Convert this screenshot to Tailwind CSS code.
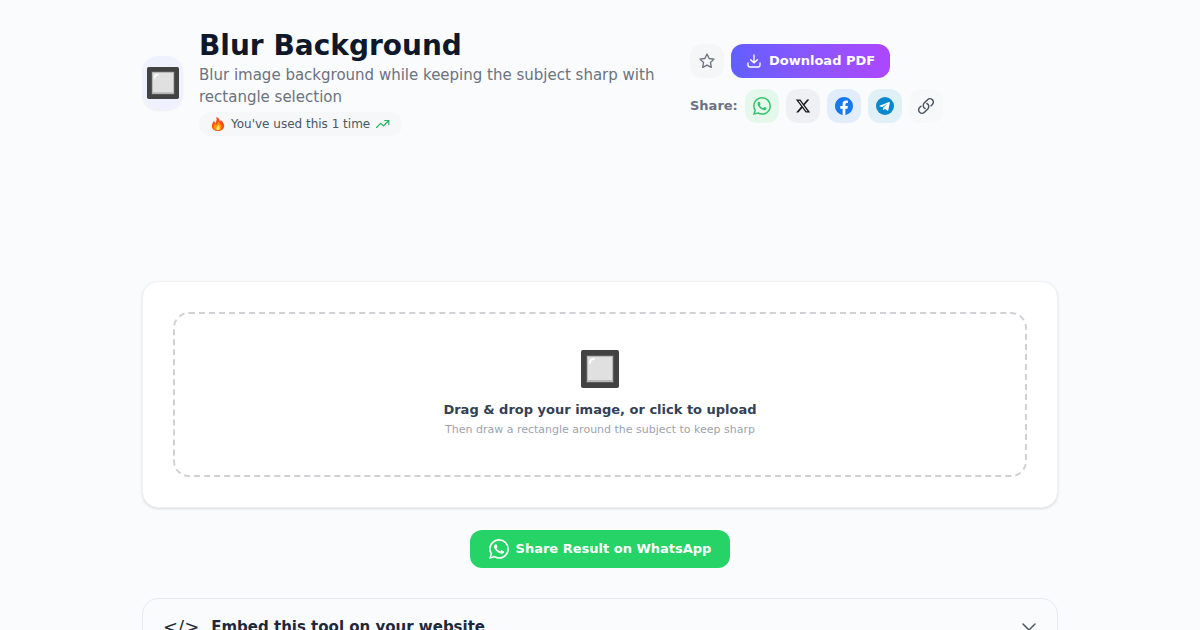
<!DOCTYPE html>
<html lang="en">
<head>
  <meta charset="UTF-8" />
  <meta name="viewport" content="width=device-width, initial-scale=1.0" />
  <title>Blur Background</title>
  <script src="https://cdn.jsdelivr.net/npm/@tailwindcss/browser@4"></script>
</head>
<body class="bg-[#fafbfd] text-[#111827] font-['DejaVu_Sans',sans-serif] overflow-x-hidden">
  <!-- shared icons -->
  <svg class="hidden" aria-hidden="true">
    <symbol id="whatsapp" viewBox="0 0 24 24">
      <path fill="currentColor" d="M17.472 14.382c-.297-.149-1.758-.867-2.03-.967-.273-.099-.471-.148-.67.15-.197.297-.767.966-.94 1.164-.173.199-.347.223-.644.075-.297-.15-1.255-.463-2.39-1.475-.883-.788-1.48-1.761-1.653-2.059-.173-.297-.018-.458.13-.606.134-.133.298-.347.446-.52.149-.174.198-.298.298-.497.099-.198.05-.371-.025-.52-.075-.149-.669-1.612-.916-2.207-.242-.579-.487-.5-.669-.51-.173-.008-.371-.01-.57-.01-.198 0-.52.074-.792.372-.272.297-1.04 1.016-1.04 2.479 0 1.462 1.065 2.875 1.213 3.074.149.198 2.096 3.2 5.077 4.487.709.306 1.262.489 1.694.625.712.227 1.36.195 1.871.118.571-.085 1.758-.719 2.006-1.413.248-.694.248-1.289.173-1.413-.074-.124-.272-.198-.57-.347m-5.421 7.403h-.004a9.87 9.87 0 01-5.031-1.378l-.361-.214-3.741.982.998-3.648-.235-.374a9.86 9.86 0 01-1.51-5.26c.001-5.45 4.436-9.884 9.888-9.884 2.64 0 5.122 1.03 6.988 2.898a9.825 9.825 0 012.893 6.994c-.003 5.45-4.437 9.884-9.885 9.884m8.413-18.297A11.815 11.815 0 0012.05 0C5.495 0 .16 5.335.157 11.892c0 2.096.547 4.142 1.588 5.945L.057 24l6.305-1.654a11.882 11.882 0 005.683 1.448h.005c6.554 0 11.89-5.335 11.893-11.893a11.821 11.821 0 00-3.48-8.413z" />
    </symbol>
    <symbol id="square-button" viewBox="0 0 38 38">
      <rect width="38" height="38" rx="2" fill="#424242" />
      <rect x="5" y="5" width="28" height="28" rx="1" fill="#5c5c5c" />
      <rect x="6" y="6" width="26" height="26" fill="#b8b8b8" />
      <rect x="7" y="7" width="24" height="23" fill="#e0e0e0" />
      <path d="M8 13c0-3 2-5 5-5 1 0 1 2 0 2-2 0-3 1-3 3 0 1-2 1-2 0z" fill="#fff" />
    </symbol>
  </svg>

  <main class="max-w-[964px] mx-auto px-6 pt-7">
    <header class="flex items-center flex-wrap md:flex-nowrap gap-4">
      <div class="w-[41px] h-[54px] shrink-0 rounded-2xl bg-[#eff1ff] shadow-xs flex items-center justify-center">
        <svg class="w-8 h-8"><use href="#square-button" /></svg>
      </div>
      <div class="w-[475px] min-w-0 max-w-full">
        <h1 class="text-[28px] leading-9 font-bold text-[#0f172a]">Blur Background</h1>
        <p class="text-[15px] leading-[22px] text-[#6b7280]">Blur image background while keeping the subject sharp with rectangle selection</p>
        <div class="inline-flex items-center gap-[6px] mt-1 px-3 h-6 rounded-full bg-[#f6f7f9] text-xs text-[#4b5563]">
          <svg class="w-[14px] h-[14px]" viewBox="0 0 16 16">
            <path d="M6 0c3 1 4 3 4 5 1 0 1-1 1-2 2 2 4 4 4 7 0 4-3 6-7 6s-7-2-7-6c0-2 1-4 3-6 0 1 0 3 1 3 1-2 2-4 1-7z" fill="#f4511e" />
            <path d="M8 5c2 2 4 4 4 6 0 3-1 4-4 4s-5-1-5-4c0-2 1-3 2-4 0 1 1 2 1 2 2-1 2-2 2-4z" fill="#ff9800" />
            <path d="M8 9c2 1 2 2 2 4 0 1-1 2-2 2s-2-1-2-2c0-2 2-2 2-4z" fill="#ffe066" />
          </svg>
          <span>You've used this 1 time</span>
          <svg class="w-[14px] h-[14px]" viewBox="0 0 24 24" fill="none" stroke="#22b45a" stroke-width="2" stroke-linecap="round" stroke-linejoin="round">
            <path d="M1 18l7-7 5 4 9-9M15 6h7v7" />
          </svg>
        </div>
      </div>
      <div class="flex flex-col gap-[11px]">
        <div class="flex gap-[7px]">
          <button aria-label="Favorite" class="w-[34px] h-[34px] rounded-xl bg-[#f5f6f8] text-[#6b7280] flex items-center justify-center">
            <svg class="w-4 h-4" viewBox="0 0 24 24" fill="none" stroke="currentColor" stroke-width="2" stroke-linejoin="round">
              <path d="M12 1.500l3.200 6.700 7.300 1-5.300 5.100 1.300 7.300-6.500-3.500-6.500 3.500 1.300-7.300-5.300-5.100 7.300-1z" />
            </svg>
          </button>
          <button class="h-[34px] px-[15px] rounded-xl bg-linear-to-r from-[#615fff] to-[#ad46ff] text-white text-[13px] font-bold flex items-center gap-[7px]">
            <svg class="w-4 h-4" viewBox="0 0 24 24" fill="none" stroke="currentColor" stroke-width="2" stroke-linecap="round" stroke-linejoin="round">
              <path d="M3 15v3a3 3 0 003 3h12a3 3 0 003-3v-3M7 10l5 5 5-5M12 15V3" />
            </svg>
            Download PDF
          </button>
        </div>
        <div class="flex items-center gap-[7px]">
          <span class="text-[13px] font-bold text-[#6b7280]">Share:</span>
          <a href="#" aria-label="WhatsApp" class="w-[34px] h-[34px] rounded-xl bg-[#e4f8ec] text-[#34c468] flex items-center justify-center">
            <svg class="w-[18px] h-[18px]"><use href="#whatsapp" /></svg>
          </a>
          <a href="#" aria-label="X" class="w-[34px] h-[34px] rounded-xl bg-[#eff0f3] text-[#14171a] flex items-center justify-center">
            <svg class="w-4 h-4" viewBox="0 0 24 24" fill="currentColor">
              <path d="M18.244 2.250h3.308l-7.227 8.260 8.502 11.240H16.170l-5.214-6.817L4.990 21.750H1.680l7.730-8.835L1.254 2.250H8.080l4.713 6.231zm-1.161 17.520h1.833L7.084 4.126H5.117z" />
            </svg>
          </a>
          <a href="#" aria-label="Facebook" class="w-[34px] h-[34px] rounded-xl bg-[#e2edfc] flex items-center justify-center">
            <svg class="w-[18px] h-[18px]" viewBox="0 0 24 24">
              <circle cx="12" cy="12" r="11" fill="#fff" />
              <path fill="#1877f2" d="M24 12.073c0-6.627-5.373-12-12-12s-12 5.373-12 12c0 5.990 4.388 10.954 10.125 11.854v-8.385H7.078v-3.470h3.047V9.430c0-3.007 1.792-4.669 4.533-4.669 1.312 0 2.686.235 2.686.235v2.953H15.830c-1.491 0-1.956.925-1.956 1.874v2.250h3.328l-.532 3.470h-2.796v8.385C19.612 23.027 24 18.062 24 12.073z" />
            </svg>
          </a>
          <a href="#" aria-label="Telegram" class="w-[34px] h-[34px] rounded-xl bg-[#e0f0f7] flex items-center justify-center">
            <svg class="w-[18px] h-[18px]" viewBox="0 0 24 24">
              <circle cx="12" cy="12" r="12" fill="#0b88cb" />
              <path d="M5 11.700l12.300-5c.8-.3 1.300.2 1.100 1.100l-2 9.700c-.2.800-.8.900-1.400.5l-3.200-2.300-1.500 1.500c-.4.400-.8.200-.8-.3l.3-2.900 5.500-5-6.800 4.200L5 12.600c-.7-.2-.7-.6 0-.9z" fill="#fff" />
            </svg>
          </a>
          <button aria-label="Copy link" class="w-[34px] h-[34px] rounded-xl bg-[#f7f8f9] text-[#4b5563] flex items-center justify-center">
            <svg class="w-[18px] h-[18px]" viewBox="0 0 24 24" fill="none" stroke="currentColor" stroke-width="2" stroke-linecap="round" stroke-linejoin="round">
              <path d="M13.200 8.700a4.500 4.500 0 011.200 7.200l-4.500 4.500a4.500 4.500 0 01-6.400-6.400l1.800-1.700M18.700 11.700l1.800-1.700a4.500 4.500 0 00-6.400-6.400L9.600 8.100a4.500 4.500 0 001.200 7.200" />
            </svg>
          </button>
        </div>
      </div>
    </header>

    <section class="mt-[143px] p-[30px] bg-white border border-[#eef0f2] rounded-2xl shadow-sm">
      <button class="w-full h-[165px] border-2 border-dashed border-[#cfd1d5] rounded-2xl flex flex-col items-center justify-center">
        <svg class="w-[38px] h-[38px] mb-3"><use href="#square-button" /></svg>
        <span class="text-[13px] leading-5 font-bold text-[#334155]">Drag &amp; drop your image, or click to upload</span>
        <span class="text-[11px] leading-5 text-[#9ca3af]">Then draw a rectangle around the subject to keep sharp</span>
      </button>
    </section>

    <div class="flex justify-center mt-[22px]">
      <button class="h-[38px] px-[19px] rounded-xl bg-[#25d366] text-white text-[13px] font-bold flex items-center gap-[7px]">
        <svg class="w-5 h-5"><use href="#whatsapp" /></svg>
        Share Result on WhatsApp
      </button>
    </div>

    <section class="mt-[30px] border border-[#e8eaed] rounded-2xl">
      <button class="w-full px-5 py-4 flex items-center gap-3 text-left text-[15px] leading-6 font-bold text-[#1e293b]">
        <span class="text-lg leading-6 font-normal">&lt;/&gt;</span>
        <span class="flex-1">Embed this tool on your website</span>
        <svg class="w-4 h-4 text-[#4b5563]" viewBox="0 0 16 16" fill="none" stroke="currentColor" stroke-width="1.500" stroke-linecap="round" stroke-linejoin="round">
          <path d="M2 5l6 6 6-6" />
        </svg>
      </button>
    </section>
  </main>
</body>
</html>
